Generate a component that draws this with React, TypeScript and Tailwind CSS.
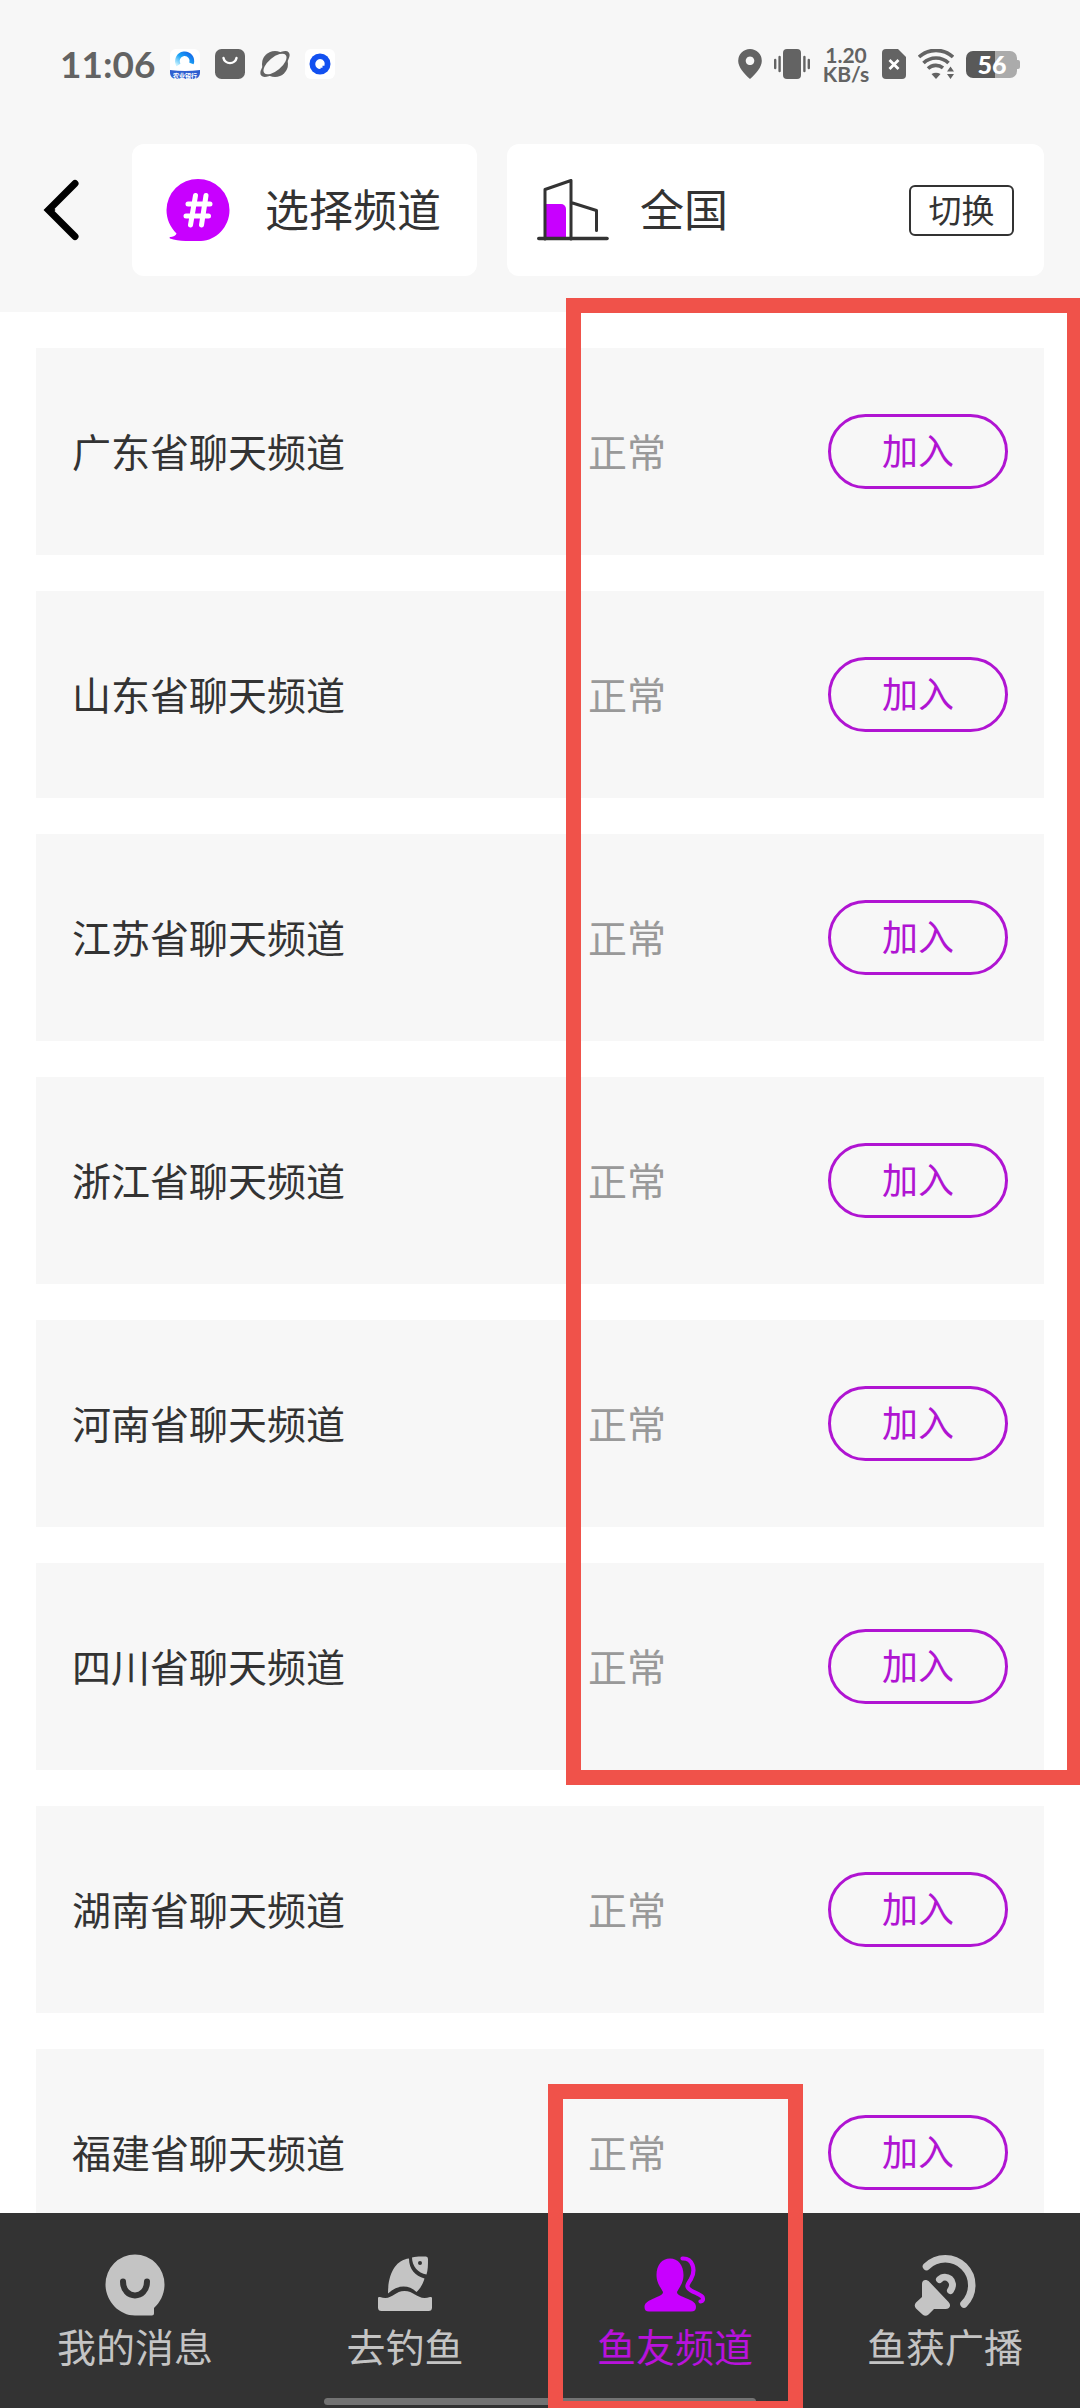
import type { ReactNode } from "react"

const channels = [
  "广东省聊天频道",
  "山东省聊天频道",
  "江苏省聊天频道",
  "浙江省聊天频道",
  "河南省聊天频道",
  "四川省聊天频道",
  "湖南省聊天频道",
  "福建省聊天频道",
]

function StatusBar() {
  return (
    <div className="flex h-32 items-center justify-between px-[60px] text-[#636363]">
      <div className="flex items-center gap-[15px]">
        <span className="font-[Lato] text-[37px] leading-[38px] font-bold">11:06</span>
        <svg className="size-[30px]" viewBox="0 0 30 30">
          <defs>
            <linearGradient id="ring" x1="0" y1="1" x2="1" y2="0">
              <stop offset="0" stopColor="#c5f1ff" />
              <stop offset="0.5" stopColor="#1aa3f5" />
              <stop offset="1" stopColor="#1466e8" />
            </linearGradient>
          </defs>
          <rect width="30" height="30" rx="6" fill="#fff" />
          <path d="M8.5 16 A7.3 7.3 0 1 1 21.5 14.5" fill="none" stroke="url(#ring)" strokeWidth="4.5" />
          <path d="M0 21 Q15 23 30 21 V24 A6 6 0 0 1 24 30 H6 A6 6 0 0 1 0 24Z" fill="#2f5fd0" />
          <text x="15" y="28.5" textAnchor="middle" fontSize="6" fontWeight="700" fill="#fff" fontFamily="Noto Sans CJK SC">
            农业银行
          </text>
        </svg>
        <svg className="size-[30px]" viewBox="0 0 30 30">
          <rect width="30" height="30" rx="6.5" fill="#636363" />
          <path d="M8.5 9 A6.6 6.2 0 0 0 21.5 9" fill="none" stroke="#fff" strokeWidth="2.4" strokeLinecap="round" />
        </svg>
        <svg className="size-[30px]" viewBox="0 0 30 30">
          <circle cx="15" cy="15" r="13" fill="#636363" />
          <ellipse cx="15" cy="15" rx="18" ry="7.5" transform="rotate(-40 15 15)" fill="#636363" />
          <ellipse cx="15" cy="15" rx="14" ry="6.5" transform="rotate(-40 15 15)" fill="#f7f7f7" />
        </svg>
        <svg className="size-[30px]" viewBox="0 0 30 30">
          <rect width="30" height="30" rx="6" fill="#fff" />
          <circle cx="15" cy="15" r="10.5" fill="#1250f0" />
          <path d="M15 10 a5 5 0 1 0 0.5 10 v-1.2 h2 v-2 h2 A5 5 0 0 0 15 10Z" fill="#fff" />
        </svg>
      </div>

      <div className="flex items-center gap-3">
        <svg className="h-[30px] w-6" viewBox="0 0 24 30">
          <path fillRule="evenodd" fill="#636363" d="M12 0 A11.8 11.8 0 0 1 23.8 12 C23.8 18 18 24.5 12 30 C6 24.5 .2 18 .2 12 A11.8 11.8 0 0 1 12 0Z M12 7.5 a4.3 4.3 0 1 0 .01 0Z" />
        </svg>
        <svg className="h-[30px] w-9" viewBox="0 0 36 30">
          <rect x="9" width="18" height="30" rx="4" fill="#636363" />
          <path d="M1.2 11v8M5.6 8v14M30.4 8v14M34.8 11v8" stroke="#636363" strokeWidth="2.4" strokeLinecap="round" />
        </svg>
        <div className="w-12 text-center font-[Lato] text-[21px] leading-[19px] font-bold whitespace-pre">{"1.20\nKB/s"}</div>
        <svg className="h-[30px] w-6" viewBox="0 0 24 30">
          <path d="M4 0 H16 L24 8 V26 A4 4 0 0 1 20 30 H4 A4 4 0 0 1 0 26 V4 A4 4 0 0 1 4 0Z" fill="#636363" />
          <path d="M7.5 11 L16.5 20 M16.5 11 L7.5 20" stroke="#fff" strokeWidth="2.8" />
        </svg>
        <svg className="h-[30px] w-9" viewBox="0 0 36 30">
          <g fill="none" stroke="#636363" strokeWidth="3.6">
            <path d="M1 8 A25 25 0 0 1 35 8" />
            <path d="M5.5 14 A18 18 0 0 1 30.5 14" />
            <path d="M10 19.5 A11.5 11.5 0 0 1 25 18.8" />
          </g>
          <path d="M13.5 25 Q18 22.5 22.5 25 L18 30Z" fill="#636363" />
          <path d="M27.5 23.7 L32.5 15.5 L38 23.7 L32.5 32Z" fill="#f7f7f7" />
          <path d="M29 22.5 L32.5 17.5 L36 22.5Z M29 25 L32.5 30 L36 25Z" fill="#636363" />
        </svg>
        <div className="relative flex h-[27px] w-[54px] items-center">
          <svg className="absolute inset-0" viewBox="0 0 54 27">
            <path d="M28 0 H44 A7 7 0 0 1 51 7 V9 H52 A2 2 0 0 1 54 11 V16 A2 2 0 0 1 52 18 H51 V20 A7 7 0 0 1 44 27 H28Z" fill="#ababab" />
            <path d="M7 0 H29 V27 H7 A7 7 0 0 1 0 20 V7 A7 7 0 0 1 7 0Z" fill="#595959" />
          </svg>
          <span className="relative w-[52px] text-center font-[Lato] text-[25px] leading-[27px] font-black text-white">56</span>
        </div>
      </div>
    </div>
  )
}

function Header() {
  return (
    <header className="flex items-center pt-4 pr-9 pb-9">
      <button type="button" aria-label="返回" className="flex w-[132px] pl-[43px]">
        <svg className="h-[62px] w-9" viewBox="0 0 36 62">
          <path d="M32 4.5 L5.5 31 L32 57.5" fill="none" stroke="#000" strokeWidth="7" strokeLinecap="round" />
          <path d="M1.5 31 L7 25.500 L12.500 31 L7 36.500Z" fill="#000" />
        </svg>
      </button>
      <button type="button" className="mr-[30px] flex h-[132px] w-[345px] items-center rounded-xl bg-white pl-[34px]">
        <svg className="h-[62px] w-16" viewBox="0 0 64 62">
          <path d="M32 0 A31.5 31 0 0 1 63.5 31 C63.5 48 50 61.5 35 62 C22 62.5 12 62 4 59.5 C3 59 3.5 58 5 58 C8 57.5 10 56.5 10.5 54.5 C4 48 .5 40 .5 31 A31.5 31 0 0 1 32 0Z" fill="#c800ff" />
          <path d="M29.5 16.5 L24.5 46 M40 16.5 L35.500 46 M22 25 H44 M20 37 H42.500" stroke="#fff" strokeWidth="5" strokeLinecap="round" />
        </svg>
        <span className="ml-[35px] text-[44px] leading-[66px]">选择频道</span>
      </button>
      <div className="flex h-[132px] flex-1 items-center rounded-xl bg-white px-[30px]">
        <svg className="h-[62px] w-[72px]" viewBox="0 0 72 62">
          <path d="M8 25 H24 A5 5 0 0 1 29 30 V59 H8Z" fill="#c800ff" />
          <path d="M8 60 V10.5 L34 1.5 V60 M34 23.5 L59.5 31.5 V51.5" fill="none" stroke="#333" strokeWidth="3" strokeLinecap="round" strokeLinejoin="round" />
          <path d="M1.8 59.5 H70" stroke="#333" strokeWidth="3.6" strokeLinecap="round" />
        </svg>
        <span className="ml-[31px] flex-1 text-[44px] leading-[66px]">全国</span>
        <button type="button" className="h-[51px] w-[105px] rounded-md border-2 border-[#333] text-[33px] leading-[47px]">
          切换
        </button>
      </div>
    </header>
  )
}

function ChannelRow({ name }: { name: string }) {
  return (
    <li className="grid h-[207px] shrink-0 grid-cols-[1fr_240px_180px] items-center bg-[#f7f7f7] px-9">
      <span>{name}</span>
      <span className="text-[#999]">正常</span>
      <button type="button" className="h-[75px] rounded-full border-3 border-[#b014d2] text-[36px] leading-[69px] text-[#b014d2]">
        加入
      </button>
    </li>
  )
}

function TabItem({ label, active, children }: { label: string; active?: boolean; children: ReactNode }) {
  return (
    <a href="#" className={active ? "flex flex-1 flex-col items-center text-[#b812dc]" : "flex flex-1 flex-col items-center text-[#c4c4c4]"}>
      <svg className="size-[66px]" viewBox="0 0 66 66">
        {children}
      </svg>
      <span className="leading-[60px]">{label}</span>
    </a>
  )
}

function TabBar() {
  return (
    <nav className="relative flex h-[195px] shrink-0 bg-[#333] pt-[38px]">
      <TabItem label="我的消息">
        <path d="M33 3.5 A29.5 30 0 0 1 62.5 33.5 C62.5 43 58.5 51 52 57 V62.5 Q52 64.5 50 64.5 H33 C17 64.5 3.5 50 3.5 33.5 A29.5 30 0 0 1 33 3.5Z" fill="#c4c4c4" />
        <path d="M21 30.5 C21 49 45 49 45 30.5" fill="none" stroke="#333" strokeWidth="6" strokeLinecap="round" />
      </TabItem>
      <TabItem label="去钓鱼">
        <path d="M37 7.5 C37 18 43 25 52.5 27.5 C51 33 48 38 44.5 41 C36 33 25 34 16 42.5 C16 22 24 9 37 7.5Z" fill="#c4c4c4" />
        <path d="M40 6.5 C45 5 50 5.5 54 5.5 Q56 5.5 56 8 C56 14 56 19 54.5 23.5 C46 22 40 15 40 6.5Z" fill="#c4c4c4" />
        <circle cx="48" cy="12" r="2" fill="#333" />
        <path d="M6 47 Q6 45.5 8 46 C20 50 22 40 32.5 40 C43 40 46 50 58 46 Q60 45.5 60 47 V56.5 Q60 60 56.5 60 H9.5 Q6 60 6 56.5Z" fill="#c4c4c4" />
      </TabItem>
      <TabItem label="鱼友频道" active>
        <path d="M28 7.5 C36 7.5 41.5 14 41.5 24 C41.5 32 37.5 36 35 41 C35 44 39 45 46 48 C52 50.5 54 52.5 54 56 Q54 60.5 49 60.5 H7 Q2.5 60.5 2.5 56 C2.5 52.5 5 50.5 10.5 48 C17 45 21 44 21 41 C18.5 36 14.5 32 14.5 24 C14.5 14 20 7.5 28 7.5Z" fill="#c800ff" />
        <path d="M40.5 7.5 C51 7 54 19 49 28 C45 34 43.5 36 49 39.5 C53 42 58 43 60.5 46 Q62 50 58.5 50.5" fill="none" stroke="#c800ff" strokeWidth="4.2" strokeLinecap="round" />
      </TabItem>
      <TabItem label="鱼获广播">
        <path d="M14.5 15.5 A26 26 0 0 1 52 53" fill="none" stroke="#c4c4c4" strokeWidth="7.5" strokeLinecap="round" />
        <path d="M27.5 28.5 C34 22 45 30 38.5 39.5" fill="none" stroke="#c4c4c4" strokeWidth="7" strokeLinecap="round" />
        <path d="M10 33 C10 28.5 14.5 28 17.5 31 L36.5 51 C39.5 54.5 38 58 33.5 58 H22 L16.5 63.5 Q13.5 66 10.5 63.5 L4 57.5 Q1.5 54.5 4 51.5 L10 46Z" fill="#c4c4c4" />
      </TabItem>

      {/* home gesture indicator */}
      <div className="absolute bottom-[3px] left-[30%] h-[7px] w-2/5 rounded-full bg-[#737373]" />
      {/* highlight on the active tab */}
      <div className="pointer-events-none absolute top-[-129px] right-[277px] -bottom-2 w-[255px] border-[15px] border-[#f0524a]" />
    </nav>
  )
}

export default function App() {
  return (
    <div className="relative flex h-screen flex-col overflow-hidden bg-white font-['Noto_Sans','Noto_Sans_CJK_SC',sans-serif] text-[39px] leading-[58px] text-[#333]">
      <div className="shrink-0 bg-[#f7f7f7]">
        <StatusBar />
        <Header />
      </div>
      <main className="relative min-h-0 flex-1">
        <ul className="flex h-full flex-col gap-9 overflow-hidden px-9 pt-9">
          {channels.map((name) => (
            <ChannelRow key={name} name={name} />
          ))}
        </ul>
        {/* highlight on the join column */}
        <div className="pointer-events-none absolute -top-[14px] -right-[2px] h-[1487px] w-[516px] border-[15px] border-[#f0524a]" />
      </main>
      <TabBar />
    </div>
  )
}
